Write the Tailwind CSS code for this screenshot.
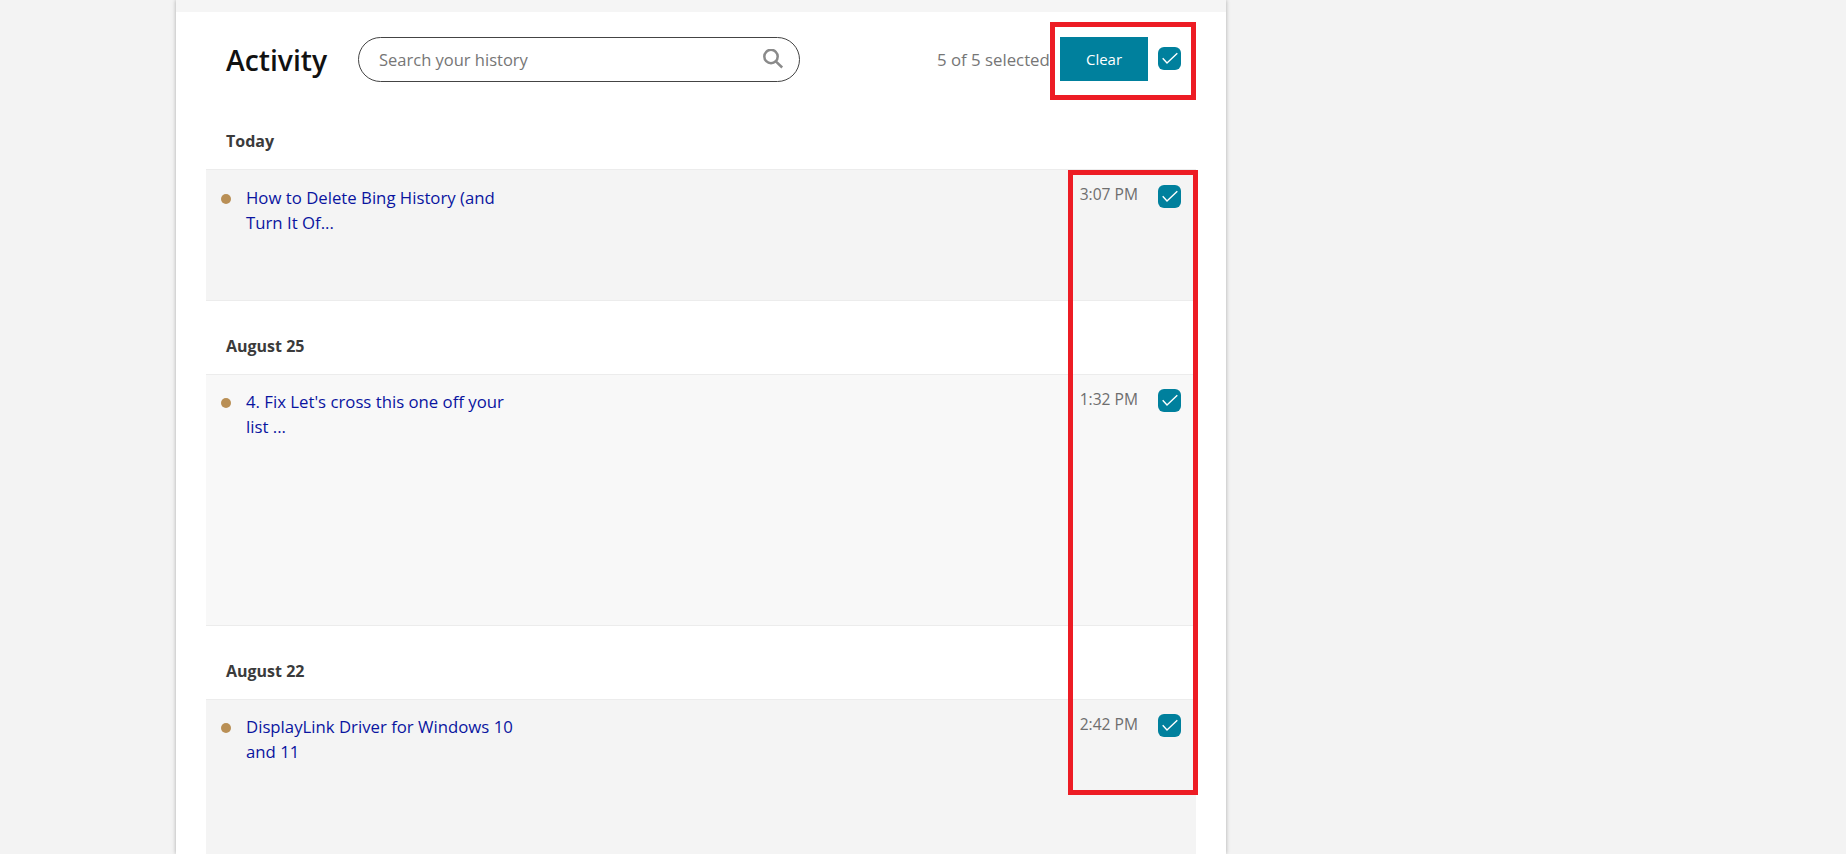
<!DOCTYPE html>
<html lang="en">
<head>
  <meta charset="UTF-8">
  <meta name="viewport" content="width=device-width, initial-scale=1.0">
  <title>Activity</title>
  <script src="https://cdn.jsdelivr.net/npm/@tailwindcss/browser@4"></script>
</head>
<body class="relative h-[854px] overflow-hidden bg-[#f3f3f3] font-['Open_Sans',sans-serif]">
  <!-- card -->
  <main class="ml-[176px] h-[854px] w-[1050px] overflow-hidden bg-white shadow-[0_0_4px_rgba(0,0,0,0.3)]">
    <div class="h-[12px] bg-[#f5f5f5]"></div>
    <div class="px-[30px]">
      <!-- header -->
      <header class="flex h-[70px] items-start pt-[25px]">
        <h1 class="ml-[20px] mt-[1px] w-[132px] text-[28.3px] leading-[45px] font-semibold text-[#111]">Activity</h1>
        <div class="flex h-[45px] w-[442px] items-center justify-between rounded-full border border-[#444] pl-[20px] pr-[15px]">
          <span class="mt-[2px] text-[16.5px] text-[#767676]">Search your history</span>
          <svg class="h-[22px] w-[22px]" viewBox="0 0 22 22" fill="none" stroke="#8a8a8a" stroke-width="2.5"><circle cx="9" cy="7.5" r="6.7"/><path d="M13.8 12.3l6.4 6.2"/></svg>
        </div>
        <span class="ml-[137px] w-[123px] text-[16.8px] leading-[45px] text-[#767676]">5 of 5 selected</span>
        <button class="h-[44px] w-[88px] bg-[#00809d] text-[15px] text-white">Clear</button>
        <span class="ml-[10px] mt-[10px] h-[23px] w-[23px] rounded-[6px] bg-[#00809d]">
          <svg class="h-[23px] w-[23px]" viewBox="0 0 23 23" fill="none" stroke="#fff" stroke-width="1.4"><path d="M4.7 11.3L9 16L19.3 6.3"/></svg>
        </span>
      </header>

      <!-- Today -->
      <h2 class="ml-[20px] flex h-[87px] items-center pt-[31px] text-[16px] font-bold text-[#3b3b3b]">Today</h2>
      <section class="flex h-[132px] justify-between border-y border-[#ececec] bg-[#f4f4f4] pt-[15px]">
        <div class="flex items-start">
          <span class="ml-[15px] mt-[9px] h-[10px] w-[10px] rounded-full bg-[#b98f55]"></span>
          <a class="ml-[15px] w-[280px] text-[16.75px] leading-[25px] text-[#0a14a0]">How to Delete Bing History (and Turn It Of...</a>
        </div>
        <div class="flex items-start pr-[15px]">
          <span class="-mt-[2px] text-[15.6px] leading-[22px] text-[#6e6e6e]">3:07 PM</span>
          <span class="ml-[20px] h-[23px] w-[23px] rounded-[6px] bg-[#00809d]">
            <svg class="h-[23px] w-[23px]" viewBox="0 0 23 23" fill="none" stroke="#fff" stroke-width="1.4"><path d="M4.7 11.3L9 16L19.3 6.3"/></svg>
          </span>
        </div>
      </section>

      <!-- August 25 -->
      <h2 class="ml-[20px] flex h-[73px] items-center pt-[16px] text-[16px] font-bold text-[#3b3b3b]">August 25</h2>
      <section class="flex h-[252px] justify-between border-y border-[#ececec] bg-[#f8f8f8] pt-[14px]">
        <div class="flex items-start">
          <span class="ml-[15px] mt-[9px] h-[10px] w-[10px] rounded-full bg-[#b98f55]"></span>
          <a class="ml-[15px] w-[280px] text-[16.75px] leading-[25px] text-[#0a14a0]">4. Fix Let's cross this one off your list ...</a>
        </div>
        <div class="flex items-start pr-[15px]">
          <span class="-mt-[1px] text-[15.6px] leading-[22px] text-[#6e6e6e]">1:32 PM</span>
          <span class="ml-[20px] h-[23px] w-[23px] rounded-[6px] bg-[#00809d]">
            <svg class="h-[23px] w-[23px]" viewBox="0 0 23 23" fill="none" stroke="#fff" stroke-width="1.4"><path d="M4.7 11.3L9 16L19.3 6.3"/></svg>
          </span>
        </div>
      </section>

      <!-- August 22 -->
      <h2 class="ml-[20px] flex h-[73px] items-center pt-[16px] text-[16px] font-bold text-[#3b3b3b]">August 22</h2>
      <section class="flex h-[155px] justify-between border-t border-[#ececec] bg-[#f4f4f4] pt-[14px]">
        <div class="flex items-start">
          <span class="ml-[15px] mt-[9px] h-[10px] w-[10px] rounded-full bg-[#b98f55]"></span>
          <a class="ml-[15px] w-[280px] text-[16.75px] leading-[25px] text-[#0a14a0]">DisplayLink Driver for Windows 10 and 11</a>
        </div>
        <div class="flex items-start pr-[15px]">
          <span class="-mt-[1px] text-[15.6px] leading-[22px] text-[#6e6e6e]">2:42 PM</span>
          <span class="ml-[20px] h-[23px] w-[23px] rounded-[6px] bg-[#00809d]">
            <svg class="h-[23px] w-[23px]" viewBox="0 0 23 23" fill="none" stroke="#fff" stroke-width="1.4"><path d="M4.7 11.3L9 16L19.3 6.3"/></svg>
          </span>
        </div>
      </section>
    </div>
  </main>

  <!-- red annotation boxes -->
  <div class="absolute left-[1050px] top-[22px] h-[78px] w-[146px] border-[5px] border-[#ed1c24]"></div>
  <div class="absolute left-[1068px] top-[170px] h-[625px] w-[130px] border-[5px] border-[#ed1c24]"></div>
</body>
</html>
